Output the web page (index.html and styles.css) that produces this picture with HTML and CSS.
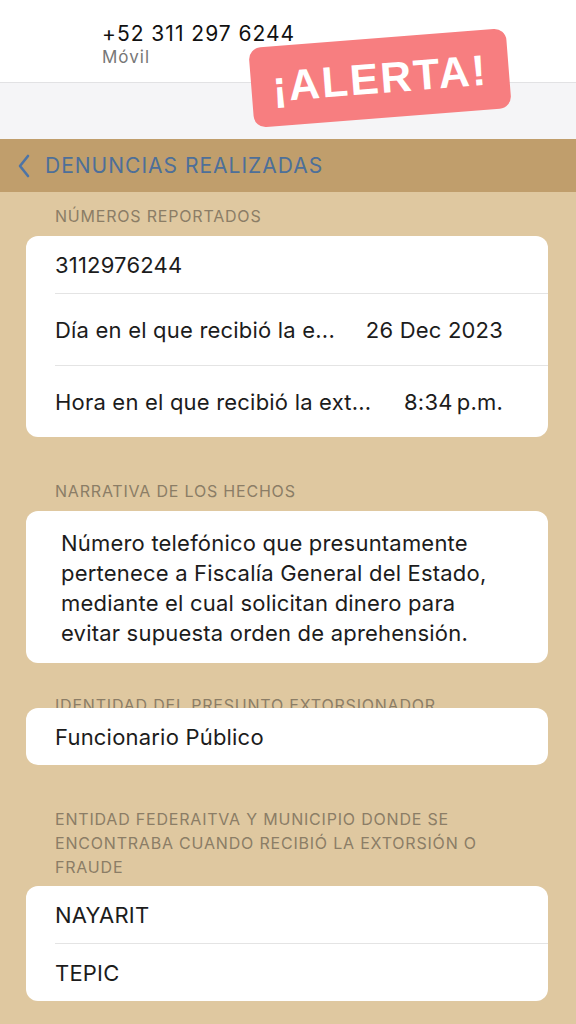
FILE: index.html
```html
<!DOCTYPE html>
<html lang="es">
<head>
    <meta charset="UTF-8">
    <meta name="viewport" content="width=device-width, initial-scale=1.0">
    <title>Denuncias realizadas</title>
    <link rel="stylesheet" href="styles.css">
</head>
<body>
    <div class="contact">
        <div class="contact-number">+52 311 297 6244</div>
        <div class="contact-type">Móvil</div>
    </div>
    <div class="contact-spacer"></div>

    <div class="alert-badge">¡ALERTA!</div>

    <nav class="navbar">
        <svg class="back-icon" width="14" height="24" viewBox="0 0 14 24">
            <path d="M11 2 L3 12 L11 22" fill="none" stroke="#4d74a6" stroke-width="2.6" stroke-linecap="round" stroke-linejoin="round"/>
        </svg>
        <span>DENUNCIAS REALIZADAS</span>
    </nav>

    <main class="content">
        <div class="section-title">NÚMEROS REPORTADOS</div>
        <div class="card">
            <div class="row">3112976244</div>
            <div class="row tall">
                <span class="label">Día en el que recibió la e...</span>
                <span class="value">26 Dec 2023</span>
            </div>
            <div class="row tall">
                <span class="label">Hora en el que recibió la ext...</span>
                <span class="value">8:34&#8201;p.m.</span>
            </div>
        </div>

        <div class="section-title">NARRATIVA DE LOS HECHOS</div>
        <div class="card narrative">
            Número telefónico que presuntamente pertenece a Fiscalía General del Estado, mediante el cual solicitan dinero para evitar supuesta orden de aprehensión.
        </div>

        <div class="section-title tight">IDENTIDAD DEL PRESUNTO EXTORSIONADOR</div>
        <div class="card">
            <div class="row">Funcionario Público</div>
        </div>

        <div class="section-title multi">ENTIDAD FEDERAITVA Y MUNICIPIO DONDE SE ENCONTRABA CUANDO RECIBIÓ LA EXTORSIÓN O FRAUDE</div>
        <div class="card">
            <div class="row">NAYARIT</div>
            <div class="row">TEPIC</div>
        </div>
    </main>
</body>
</html>
```

FILE: styles.css
```css
body {
    margin: 0;
    font-family: Inter, "Liberation Sans", sans-serif;
    background-color: #dfc8a0;
    color: #1c1c1c;
}
.contact {
    background-color: #fff;
    height: 83px;
    box-sizing: border-box;
    padding: 22px 0 0 102px;
    border-bottom: 1px solid #e2e2e4;
}
.contact-number {
    font-size: 21px;
    line-height: 24px;
    letter-spacing: 1px;
    color: #111;
}
.contact-type {
    font-size: 17px;
    line-height: 22px;
    letter-spacing: 1px;
    color: #777;
}
.contact-spacer {
    background-color: #f5f5f7;
    height: 56px;
}
.alert-badge {
    position: absolute;
    left: 251px;
    top: 38px;
    width: 258px;
    height: 80px;
    background-color: #f77e80;
    border-radius: 12px;
    transform: rotate(-4.5deg);
    color: #fff;
    font-family: "Liberation Sans", Arial, sans-serif;
    font-weight: bold;
    font-size: 43px;
    display: flex;
    align-items: center;
    justify-content: center;
    letter-spacing: 2px;
}
.navbar {
    background-color: #c09e6c;
    height: 53px;
    display: flex;
    align-items: center;
    padding-left: 17px;
    gap: 14px;
    color: #4d6f99;
    font-size: 21px;
    letter-spacing: 1px;
}
.content {
    padding: 12px 28px 22px 26px;
}
.section-title {
    color: #8b7d66;
    font-size: 16px;
    line-height: 24px;
    letter-spacing: 0.8px;
    padding: 0 0 8px 29px;
}
.section-title.tight {
    padding-bottom: 0;
    margin-bottom: -9px;
}
.section-title.multi {
    padding-right: 48px;
    padding-bottom: 7px;
}
.card {
    position: relative;
    background-color: #fff;
    border-radius: 12px;
    margin-bottom: 42px;
}
.card.narrative {
    margin-bottom: 30px;
}
.card:last-child {
    margin-bottom: 0;
}
.row {
    display: flex;
    justify-content: space-between;
    align-items: center;
    height: 57px;
    margin-left: 29px;
    padding-right: 45px;
    font-size: 22px;
    letter-spacing: 0.2px;
    border-bottom: 1px solid #e4e4e4;
}
.row.tall {
    height: 71px;
}
.row:last-child {
    border-bottom: none;
}
.narrative {
    padding: 17px 43px 15px 35px;
    font-size: 22px;
    line-height: 30px;
    letter-spacing: 0.2px;
}
```
